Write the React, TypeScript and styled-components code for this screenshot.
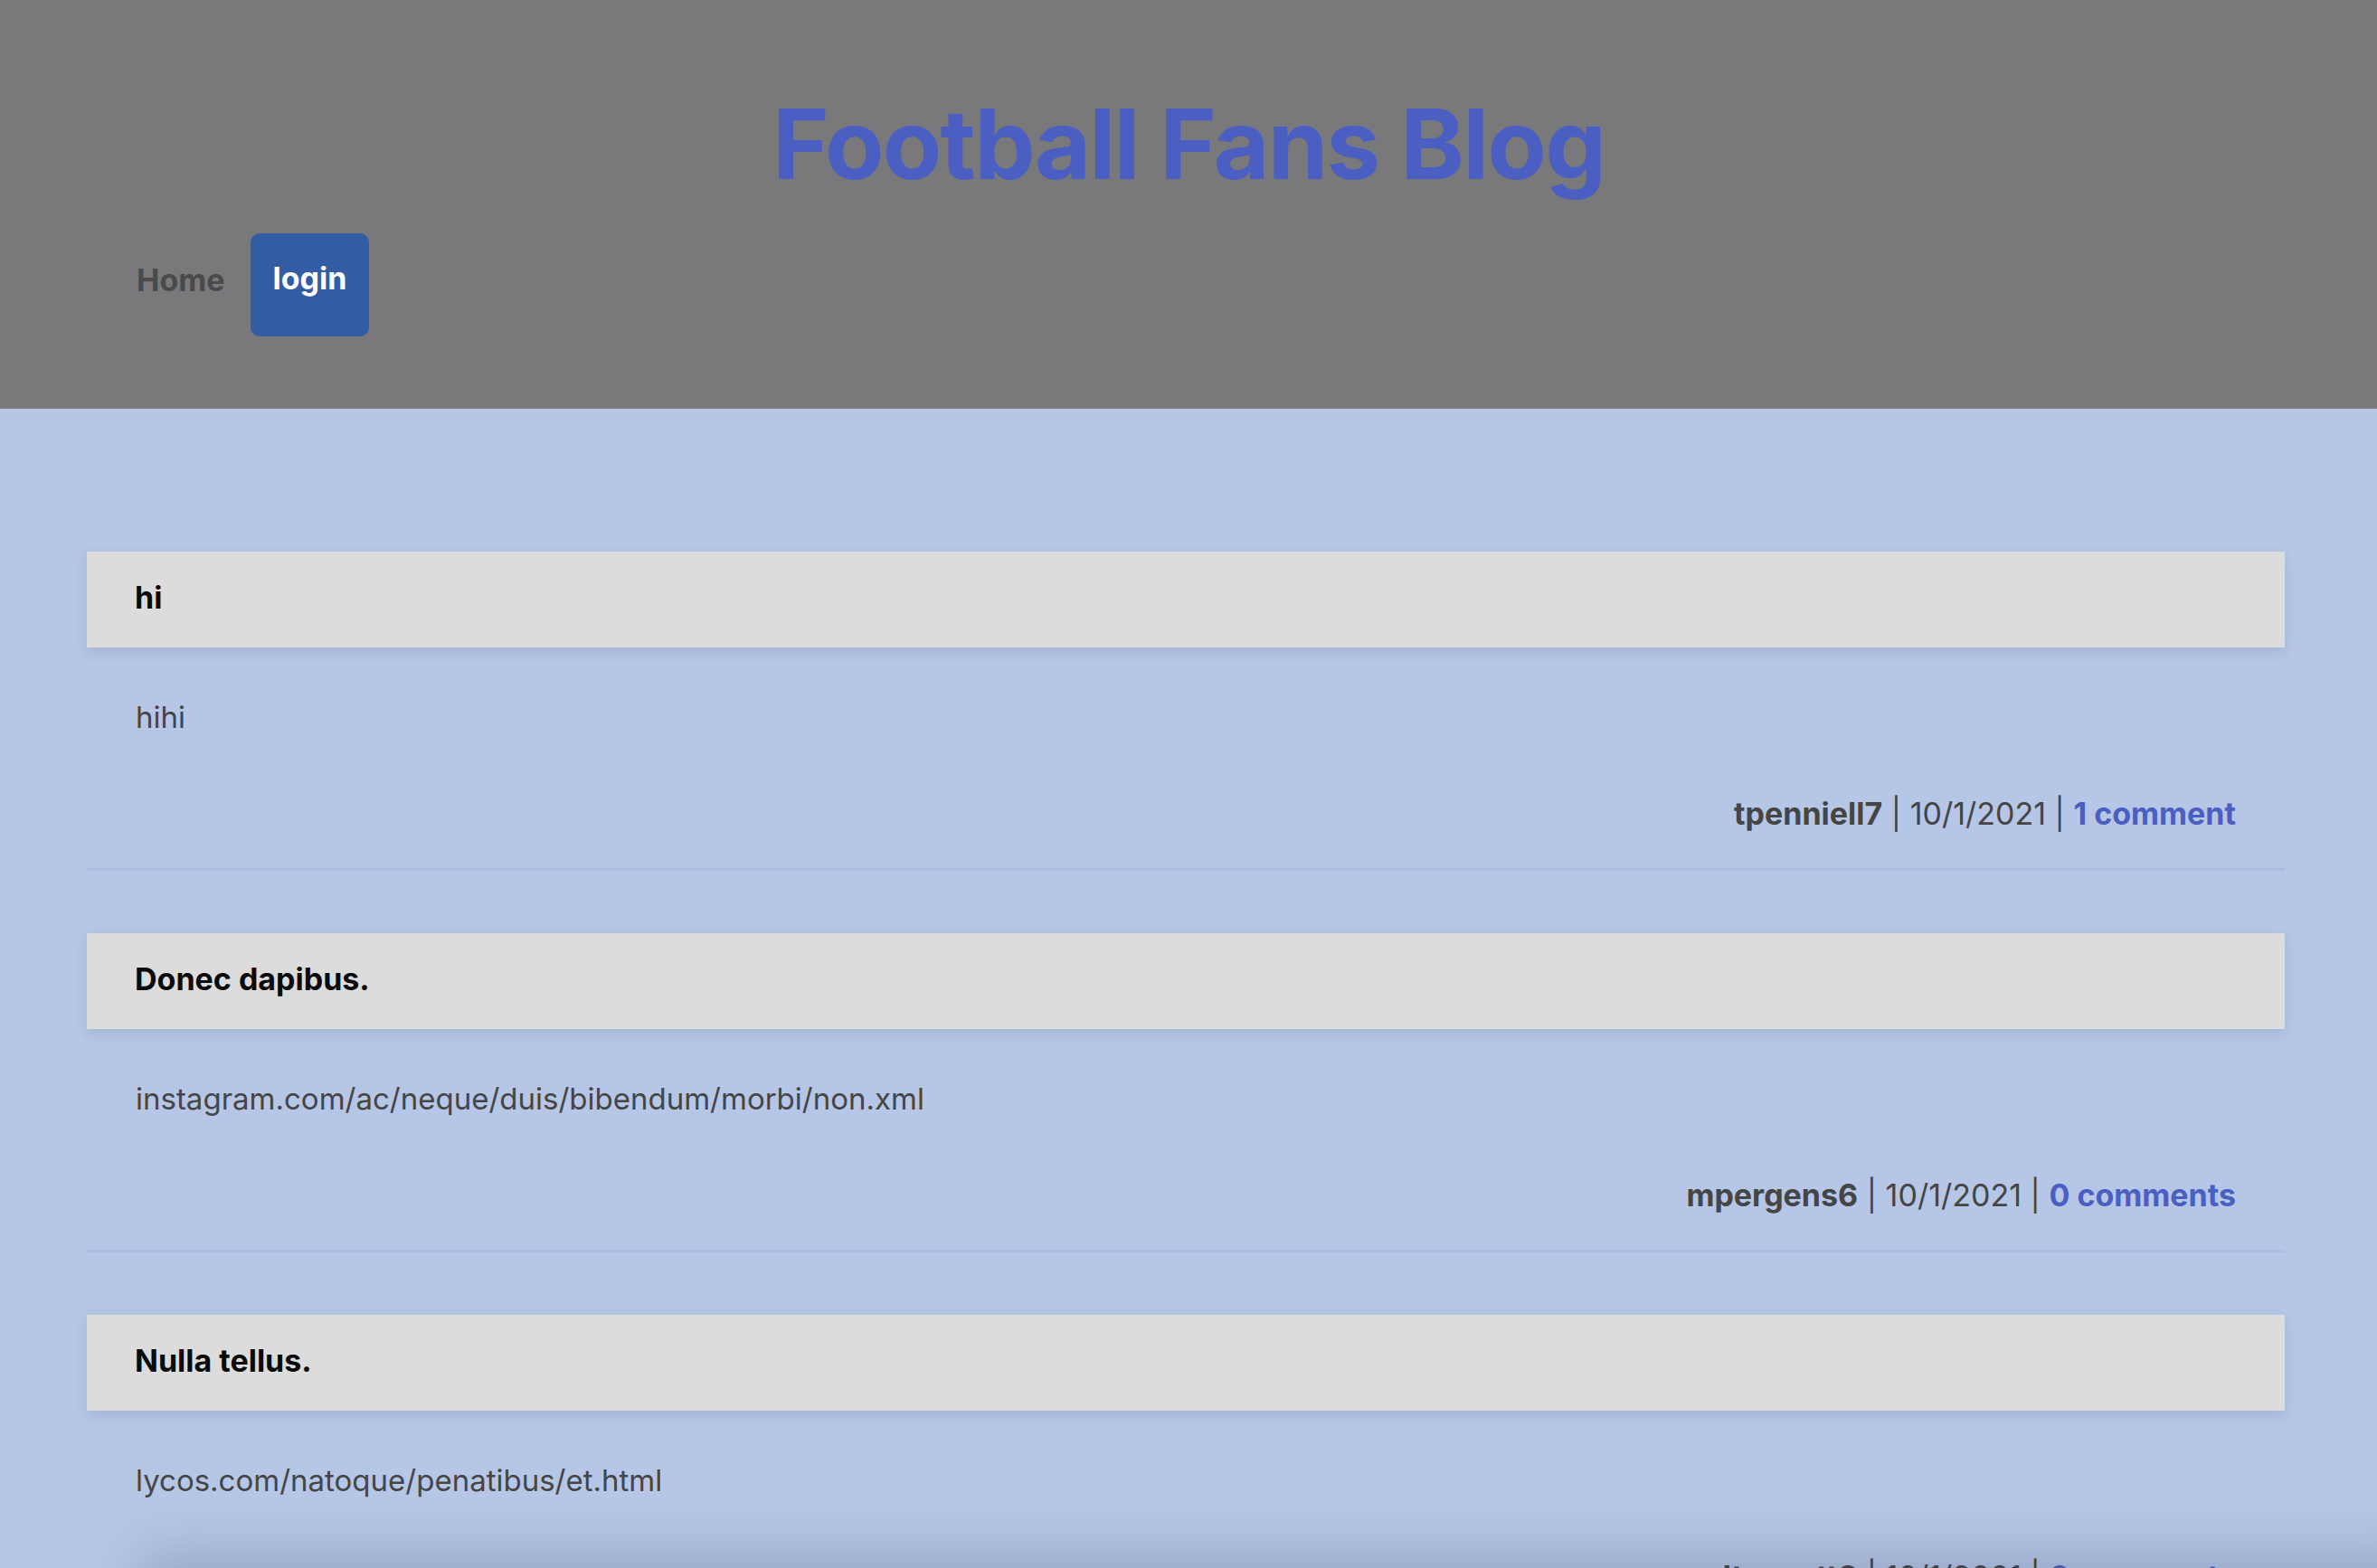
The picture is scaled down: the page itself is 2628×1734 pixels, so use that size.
import React from "react";
import styled, { createGlobalStyle } from "styled-components";

const GlobalStyle = createGlobalStyle`
  html, body {
    margin: 0;
    padding: 0;
    background: #b5c6e6;
  }
  body {
    font-family: Inter, "Noto Sans", "Liberation Sans", sans-serif;
    overflow: hidden;
  }
  * { box-sizing: border-box; }
`;

const Header = styled.header`
  background: #79797b;
  padding: 94px 0 80px;
`;

const Title = styled.h1`
  margin: 0;
  text-align: center;
  font-size: 107px;
  line-height: 130px;
  font-weight: 700;
  letter-spacing: -1.8px;
  color: #4a5fc1;
`;

const Nav = styled.nav`
  display: flex;
  align-items: flex-start;
  gap: 28px;
  margin-top: 34px;
  padding-left: 151px;
`;

const NavLink = styled.a<{ $active?: boolean }>`
  display: block;
  font-size: 34px;
  line-height: 41px;
  font-weight: 700;
  text-decoration: none;
  color: ${(p) => (p.$active ? "#ffffff" : "#4a4a4a")};
  background: ${(p) => (p.$active ? "#325ca3" : "transparent")};
  border-radius: 10px;
  padding: ${(p) => (p.$active ? "29px 25px 44px" : "31px 0 0")};
`;

const Main = styled.main`
  padding: 158px 102px 0 96px;
  display: flex;
  flex-direction: column;
  gap: 69px;
`;

const Card = styled.article`
  border-bottom: 3px solid rgba(120, 140, 190, 0.16);
  padding-bottom: 40px;
`;

const CardTitle = styled.h2`
  margin: 0;
  height: 106px;
  padding: 30px 53px 35px;
  background: #dcdcdc;
  font-size: 34px;
  line-height: 41px;
  font-weight: 700;
  color: #0a0a0a;
  box-shadow: 0 5px 12px rgba(60, 70, 110, 0.14);
`;

const CardBody = styled.p`
  margin: 57px 0 0;
  padding: 0 54px;
  font-size: 33px;
  line-height: 41px;
  font-weight: 400;
  color: #454545;
`;

const CardFooter = styled.div`
  margin-top: 65px;
  padding: 0 54px;
  text-align: right;
  font-size: 34px;
  line-height: 41px;
  color: #454545;
`;

const Author = styled.span`
  font-weight: 700;
  color: #454545;
`;

const CommentLink = styled.a`
  font-weight: 700;
  color: #4a5fc1;
  text-decoration: none;
`;

const BottomShade = styled.div`
  position: fixed;
  left: 170px;
  right: -40px;
  bottom: -60px;
  height: 60px;
  box-shadow: 0 0 60px 14px rgba(40, 50, 80, 0.22);
  pointer-events: none;
`;

const posts = [
  { title: "hi", body: "hihi", author: "tpenniell7", date: "10/1/2021", comments: 1 },
  {
    title: "Donec dapibus.",
    body: "instagram.com/ac/neque/duis/bibendum/morbi/non.xml",
    author: "mpergens6",
    date: "10/1/2021",
    comments: 0,
  },
  {
    title: "Nulla tellus.",
    body: "lycos.com/natoque/penatibus/et.html",
    author: "dtrewett8",
    date: "10/1/2021",
    comments: 0,
  },
];

export default function App() {
  return (
    <>
      <GlobalStyle />
      <Header>
        <Title>Football Fans Blog</Title>
        <Nav>
          <NavLink href="#">Home</NavLink>
          <NavLink href="#" $active>
            login
          </NavLink>
        </Nav>
      </Header>
      <Main>
        {posts.map((p) => (
          <Card key={p.title}>
            <CardTitle>{p.title}</CardTitle>
            <CardBody>{p.body}</CardBody>
            <CardFooter>
              <Author>{p.author}</Author> | {p.date} |{" "}
              <CommentLink href="#">
                {p.comments} {p.comments === 1 ? "comment" : "comments"}
              </CommentLink>
            </CardFooter>
          </Card>
        ))}
      </Main>
      <BottomShade />
    </>
  );
}
